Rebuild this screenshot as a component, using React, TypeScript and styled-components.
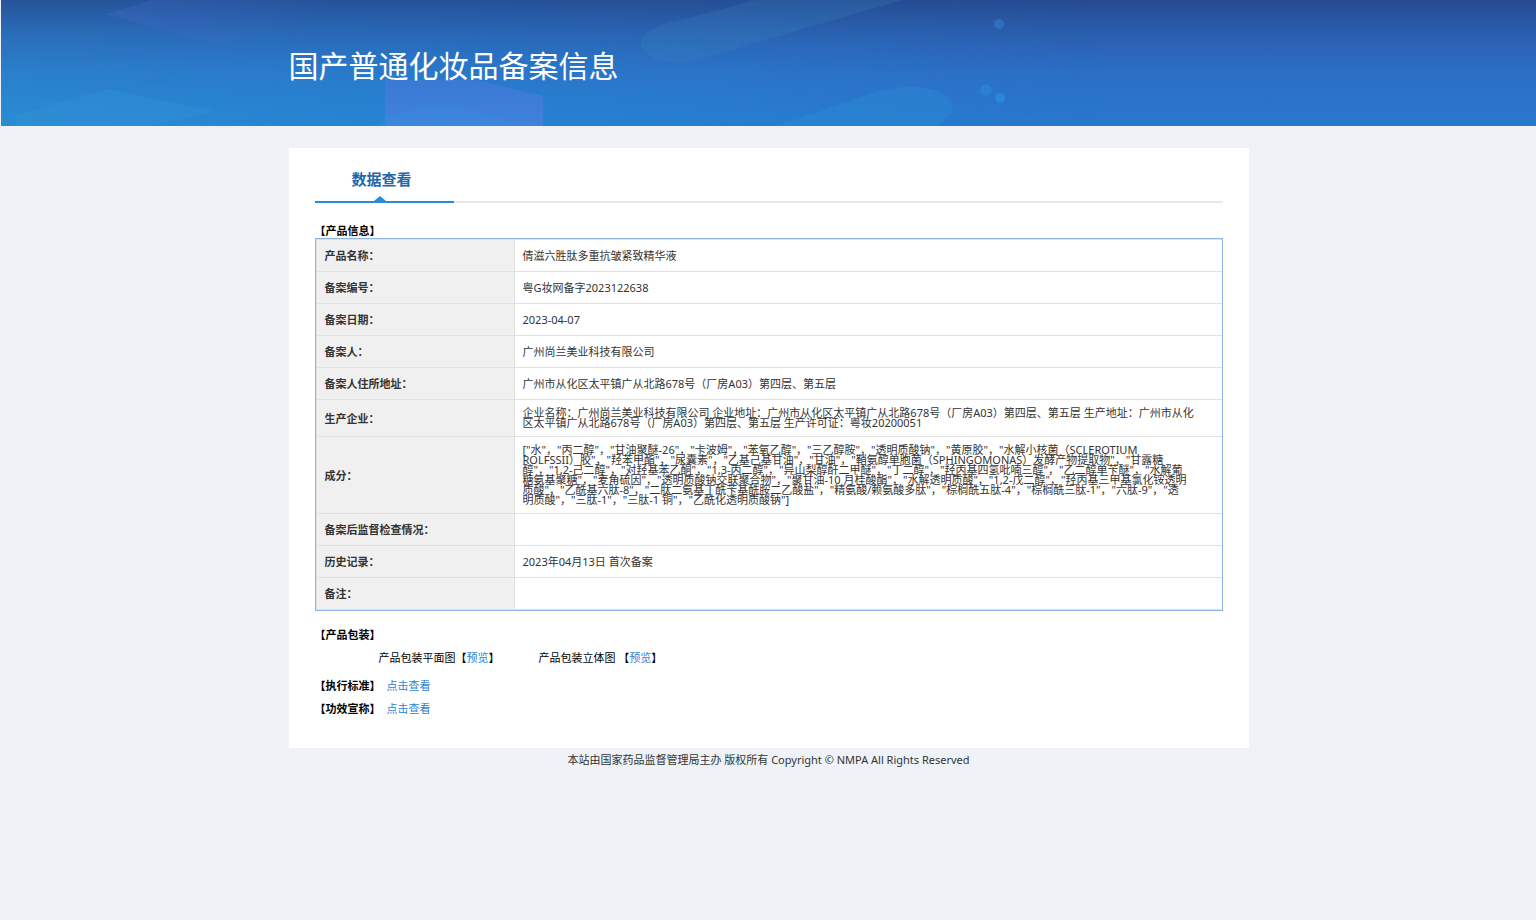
import React from "react";
import styled, { createGlobalStyle } from "styled-components";

const GlobalStyle = createGlobalStyle`
  * { box-sizing: border-box; }
  body {
    margin: 0;
    background: #eff3f7;
    color: #333;
    font: 11px/16px "Noto Sans", "Noto Sans CJK SC", sans-serif;
  }
`;

const Page = styled.div`
  padding-left: 1px;
`;

const Banner = styled.header`
  position: relative;
  height: 126px;
  background: linear-gradient(180deg, #264b92 0%, #2b60b2 30%, #2c6ec6 58%, #2878cf 100%);
`;

const BannerArt = styled.svg`
  position: absolute;
  inset: 0;
  width: 100%;
  height: 100%;
`;

const Container = styled.div`
  position: relative;
  width: 100%;
  max-width: 960px;
  margin: 0 auto;
`;

const Title = styled.h1`
  margin: 0;
  padding-top: 46px;
  color: #fff;
  font-size: 30px;
  line-height: 40px;
  font-weight: 400;
`;

const Card = styled.main`
  margin-top: 22px;
  padding: 16px 26px 31px;
  background: #fff;
`;

const TabBar = styled.nav`
  display: flex;
  height: 39px;
  border-bottom: 2px solid #e8e8e8;
`;

const Tab = styled.a`
  position: relative;
  width: 139px;
  height: 39px;
  padding: 3px 0 0 37px;
  border-bottom: 2px solid #2a8cd8;
  color: #1e67ac;
  font-size: 15px;
  line-height: 24px;
  font-weight: 700;
  text-decoration: none;

  &::after {
    content: "";
    position: absolute;
    left: 59px;
    bottom: 0;
    border: solid transparent;
    border-width: 0 6px 5px;
    border-bottom-color: #2a8cd8;
  }
`;

const SectionTitle = styled.h2`
  margin: 0;
  color: #000;
  font-size: 11px;
  line-height: 16px;
  font-weight: 700;
`;

const InfoTable = styled.table`
  width: 100%;
  border: 1px solid #8fb4e3;
  border-collapse: separate;
  border-spacing: 0;
  table-layout: fixed;

  th,
  td {
    border-bottom: 1px solid #e1e1e1;
  }

  tr:first-child > * {
    border-top: 1px solid #e1e1e1;
  }
`;

const Label = styled.th`
  width: 199px;
  padding: 8px;
  border-left: 1px solid #e1e1e1;
  border-right: 1px solid #e1e1e1;
  background: #f0f0f0;
  text-align: left;
  line-height: 15px;
`;

const Value = styled.td`
  padding: 8px 0 8px 8px;
  line-height: 10px;
  white-space: pre;
`;

const Section = styled.section`
  margin-top: ${(p: { $gap: number }) => p.$gap}px;
`;

const TableSection = styled(Section)`
  ${SectionTitle} {
    line-height: 15px;
  }
`;

const InlineSection = styled(Section)`
  display: flex;
  gap: 6px;
`;

const Previews = styled.div`
  display: flex;
  gap: 39px;
  padding: 7px 0 0 64px;
  color: #000;
`;

const Link = styled.a`
  color: #2a84d2;
  text-decoration: none;
`;

const Footer = styled.footer`
  padding: 4px 0;
  text-align: center;
`;

const rows: [string, string][] = [
  ["产品名称：", "倩滋六胜肽多重抗皱紧致精华液"],
  ["备案编号：", "粤G妆网备字2023122638"],
  ["备案日期：", "2023-04-07"],
  ["备案人：", "广州尚兰美业科技有限公司"],
  ["备案人住所地址：", "广州市从化区太平镇广从北路678号（厂房A03）第四层、第五层"],
  [
    "生产企业：",
    "企业名称：广州尚兰美业科技有限公司 企业地址：广州市从化区太平镇广从北路678号（厂房A03）第四层、第五层 生产地址：广州市从化\n" +
      "区太平镇广从北路678号（厂房A03）第四层、第五层 生产许可证：粤妆20200051",
  ],
  [
    "成分：",
    '["水"，"丙二醇"，"甘油聚醚-26"，"卡波姆"，"苯氧乙醇"，"三乙醇胺"，"透明质酸钠"，"黄原胶"，"水解小核菌（SCLEROTIUM\n' +
      'ROLFSSII）胶"，"羟苯甲酯"，"尿囊素"，"乙基己基甘油"，"甘油"，"鞘氨醇单胞菌（SPHINGOMONAS）发酵产物提取物"，"甘露糖\n' +
      '醇"，"1,2-己二醇"，"对羟基苯乙酮"，"1,3-丙二醇"，"异山梨醇酐二甲醚"，"丁二醇"，"羟丙基四氢吡喃三醇"，"乙二醇单苄醚"，"水解葡\n' +
      '糖氨基聚糖"，"麦角硫因"，"透明质酸钠交联聚合物"，"聚甘油-10 月桂酸酯"，"水解透明质酸"，"1,2-戊二醇"，"羟丙基三甲基氯化铵透明\n' +
      '质酸"，"乙酰基六肽-8"，"二肽二氨基丁酰苄基酰胺二乙酸盐"，"精氨酸/赖氨酸多肽"，"棕榈酰五肽-4"，"棕榈酰三肽-1"，"六肽-9"，"透\n' +
      '明质酸"，"三肽-1"，"三肽-1 铜"，"乙酰化透明质酸钠"]',
  ],
  ["备案后监督检查情况：", ""],
  ["历史记录：", "2023年04月13日 首次备案"],
  ["备注：", ""],
];

function BannerBackground() {
  return (
    <BannerArt viewBox="0 0 1535 126" preserveAspectRatio="none" aria-hidden="true">
      <defs>
        <linearGradient id="teal" x1="0" y1="0" x2="1" y2="0">
          <stop offset="0" stopColor="#2a9ad4" stopOpacity="0.6" />
          <stop offset="0.35" stopColor="#2491d6" stopOpacity="0.5" />
          <stop offset="1" stopColor="#2491d6" stopOpacity="0" />
        </linearGradient>
        <linearGradient id="fade" x1="0" y1="0" x2="0" y2="1">
          <stop offset="0" stopColor="#fff" stopOpacity="0.2" />
          <stop offset="1" stopColor="#fff" stopOpacity="1" />
        </linearGradient>
        <mask id="lower">
          <rect width="1535" height="126" fill="url(#fade)" />
        </mask>
        <linearGradient id="violet" x1="0" y1="0" x2="1" y2="0">
          <stop offset="0" stopColor="#4468c8" stopOpacity="0.34" />
          <stop offset="1" stopColor="#4468c8" stopOpacity="0" />
        </linearGradient>
        <linearGradient id="block" x1="0" y1="0" x2="0" y2="1">
          <stop offset="0" stopColor="#4a78da" stopOpacity="0.55" />
          <stop offset="1" stopColor="#4a82e0" stopOpacity="0.7" />
        </linearGradient>
      </defs>
      <rect width="1100" height="126" fill="url(#teal)" mask="url(#lower)" />
      <path d="M106 14 L150 0 H340 L223 47 Z" fill="url(#violet)" />
      <path d="M15 126 V115 L106 89 L214 111 L150 126 Z" fill="#46a0e0" fillOpacity="0.14" />
      <path d="M384 80 H475 L542 96 V126 H384 Z" fill="url(#block)" />
      <path d="M372 126 Q440 88 515 126 Z" fill="#3a8ce0" fillOpacity="0.35" />
      <path d="M902 0 H755 L664 24 Q638 33 640 46 Q648 66 690 62 L767 39 Z" fill="#3a8ac0" fillOpacity="0.22" />
      <path d="M776 126 L874 92 Q915 82 938 92 Q954 99 951 113 L938 126 Z" fill="#2f96d8" fillOpacity="0.26" />
      <circle cx="998" cy="24" r="5" fill="#2e80d0" fillOpacity="0.6" />
      <circle cx="985" cy="90" r="6" fill="#2b8de2" fillOpacity="0.5" />
      <circle cx="999" cy="98" r="5" fill="#2b8de2" fillOpacity="0.7" />
    </BannerArt>
  );
}

export default function App() {
  return (
    <Page>
      <GlobalStyle />
      <Banner>
        <BannerBackground />
        <Container>
          <Title>国产普通化妆品备案信息</Title>
        </Container>
      </Banner>
      <Container>
        <Card>
          <TabBar>
            <Tab href="#data">数据查看</Tab>
          </TabBar>
          <TableSection $gap={20} id="data">
            <SectionTitle>【产品信息】</SectionTitle>
            <InfoTable>
              <tbody>
                {rows.map(([label, value]) => (
                  <tr key={label}>
                    <Label scope="row">{label}</Label>
                    <Value>{value}</Value>
                  </tr>
                ))}
              </tbody>
            </InfoTable>
          </TableSection>
          <Section $gap={16}>
            <SectionTitle>【产品包装】</SectionTitle>
            <Previews>
              <span>产品包装平面图【<Link href="#flat">预览</Link>】</span>
              <span>产品包装立体图 【<Link href="#solid">预览</Link>】</span>
            </Previews>
          </Section>
          <InlineSection $gap={12}>
            <SectionTitle>【执行标准】</SectionTitle>
            <Link href="#standard">点击查看</Link>
          </InlineSection>
          <InlineSection $gap={7}>
            <SectionTitle>【功效宣称】</SectionTitle>
            <Link href="#claims">点击查看</Link>
          </InlineSection>
        </Card>
        <Footer>本站由国家药品监督管理局主办 版权所有 Copyright © NMPA All Rights Reserved</Footer>
      </Container>
    </Page>
  );
}
